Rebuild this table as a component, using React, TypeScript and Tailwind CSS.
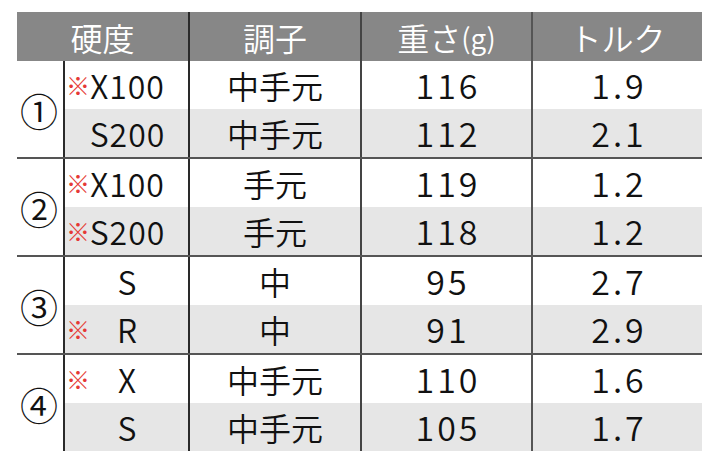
import React from "react";

interface Row {
  mark: boolean;
  hardness: string;
  flex: string;
  weight: string;
  torque: string;
}

interface Group {
  no: string;
  rows: Row[];
}

const groups: Group[] = [
  {
    no: "①",
    rows: [
      { mark: true, hardness: "X100", flex: "中手元", weight: "116", torque: "1.9" },
      { mark: false, hardness: "S200", flex: "中手元", weight: "112", torque: "2.1" },
    ],
  },
  {
    no: "②",
    rows: [
      { mark: true, hardness: "X100", flex: "手元", weight: "119", torque: "1.2" },
      { mark: true, hardness: "S200", flex: "手元", weight: "118", torque: "1.2" },
    ],
  },
  {
    no: "③",
    rows: [
      { mark: false, hardness: "S", flex: "中", weight: "95", torque: "2.7" },
      { mark: true, hardness: "R", flex: "中", weight: "91", torque: "2.9" },
    ],
  },
  {
    no: "④",
    rows: [
      { mark: true, hardness: "X", flex: "中手元", weight: "110", torque: "1.6" },
      { mark: false, hardness: "S", flex: "中手元", weight: "105", torque: "1.7" },
    ],
  },
];

const font = { fontFamily: '"Noto Sans CJK JP", "Noto Sans", sans-serif' };

export default function App() {
  return (
    <div className="w-[720px] h-[461px] bg-white pt-[12px] pl-[17px]" style={font}>
      <div className="w-[685px]">
        {/* header */}
        <div className="flex h-[49px] bg-[#878787] text-white text-[32px] leading-none font-[350]">
          <div className="w-[171px] flex items-center justify-center">硬度</div>
          <div className="w-[172px] flex items-center justify-center border-l-2 border-[#2a2a2a]">調子</div>
          <div className="w-[171px] flex items-center justify-center border-l-2 border-[#444]">
            重さ<span className="text-[28px]">(g)</span>
          </div>
          <div className="w-[171px] flex items-center justify-center border-l-2 border-[#555]">トルク</div>
        </div>

        {groups.map((g, gi) => (
          <div key={g.no} className={gi > 0 ? "flex border-t-2 border-[#555]" : "flex"}>
            <div className="w-[48px] flex items-center justify-center border-r-2 border-[#2a2a2a] bg-white text-[38px] font-[350] text-[#111] pr-[2px]">
              {g.no}
            </div>
            <div className="flex-1 flex flex-col">
              {g.rows.map((r, ri) => (
                <div
                  key={ri}
                  className={
                    ri === 0
                      ? "flex h-[48px] bg-white text-[32px] text-[#111] leading-none font-[350]"
                      : "flex h-[48px] bg-[#e6e6e6] text-[32px] text-[#111] leading-none font-[350]"
                  }
                >
                  <div className="relative w-[123px] flex items-center justify-center tracking-[1px] pl-[2px]">
                    {r.mark && (
                      <span className="absolute left-[1px] top-1/2 -translate-y-1/2 text-[24px] font-normal text-[#e53935]">
                        ※
                      </span>
                    )}
                    {r.hardness}
                  </div>
                  <div className="w-[172px] flex items-center justify-center border-l-2 border-[#2a2a2a]">
                    {r.flex}
                  </div>
                  <div className="w-[171px] flex items-center justify-center border-l-2 border-[#444] text-[34px] tracking-[3px] pl-[3px]">
                    {r.weight}
                  </div>
                  <div className="w-[171px] flex items-center justify-center border-l-2 border-[#555] text-[34px] tracking-[3px] pl-[3px]">
                    {r.torque}
                  </div>
                </div>
              ))}
            </div>
          </div>
        ))}
      </div>
    </div>
  );
}
